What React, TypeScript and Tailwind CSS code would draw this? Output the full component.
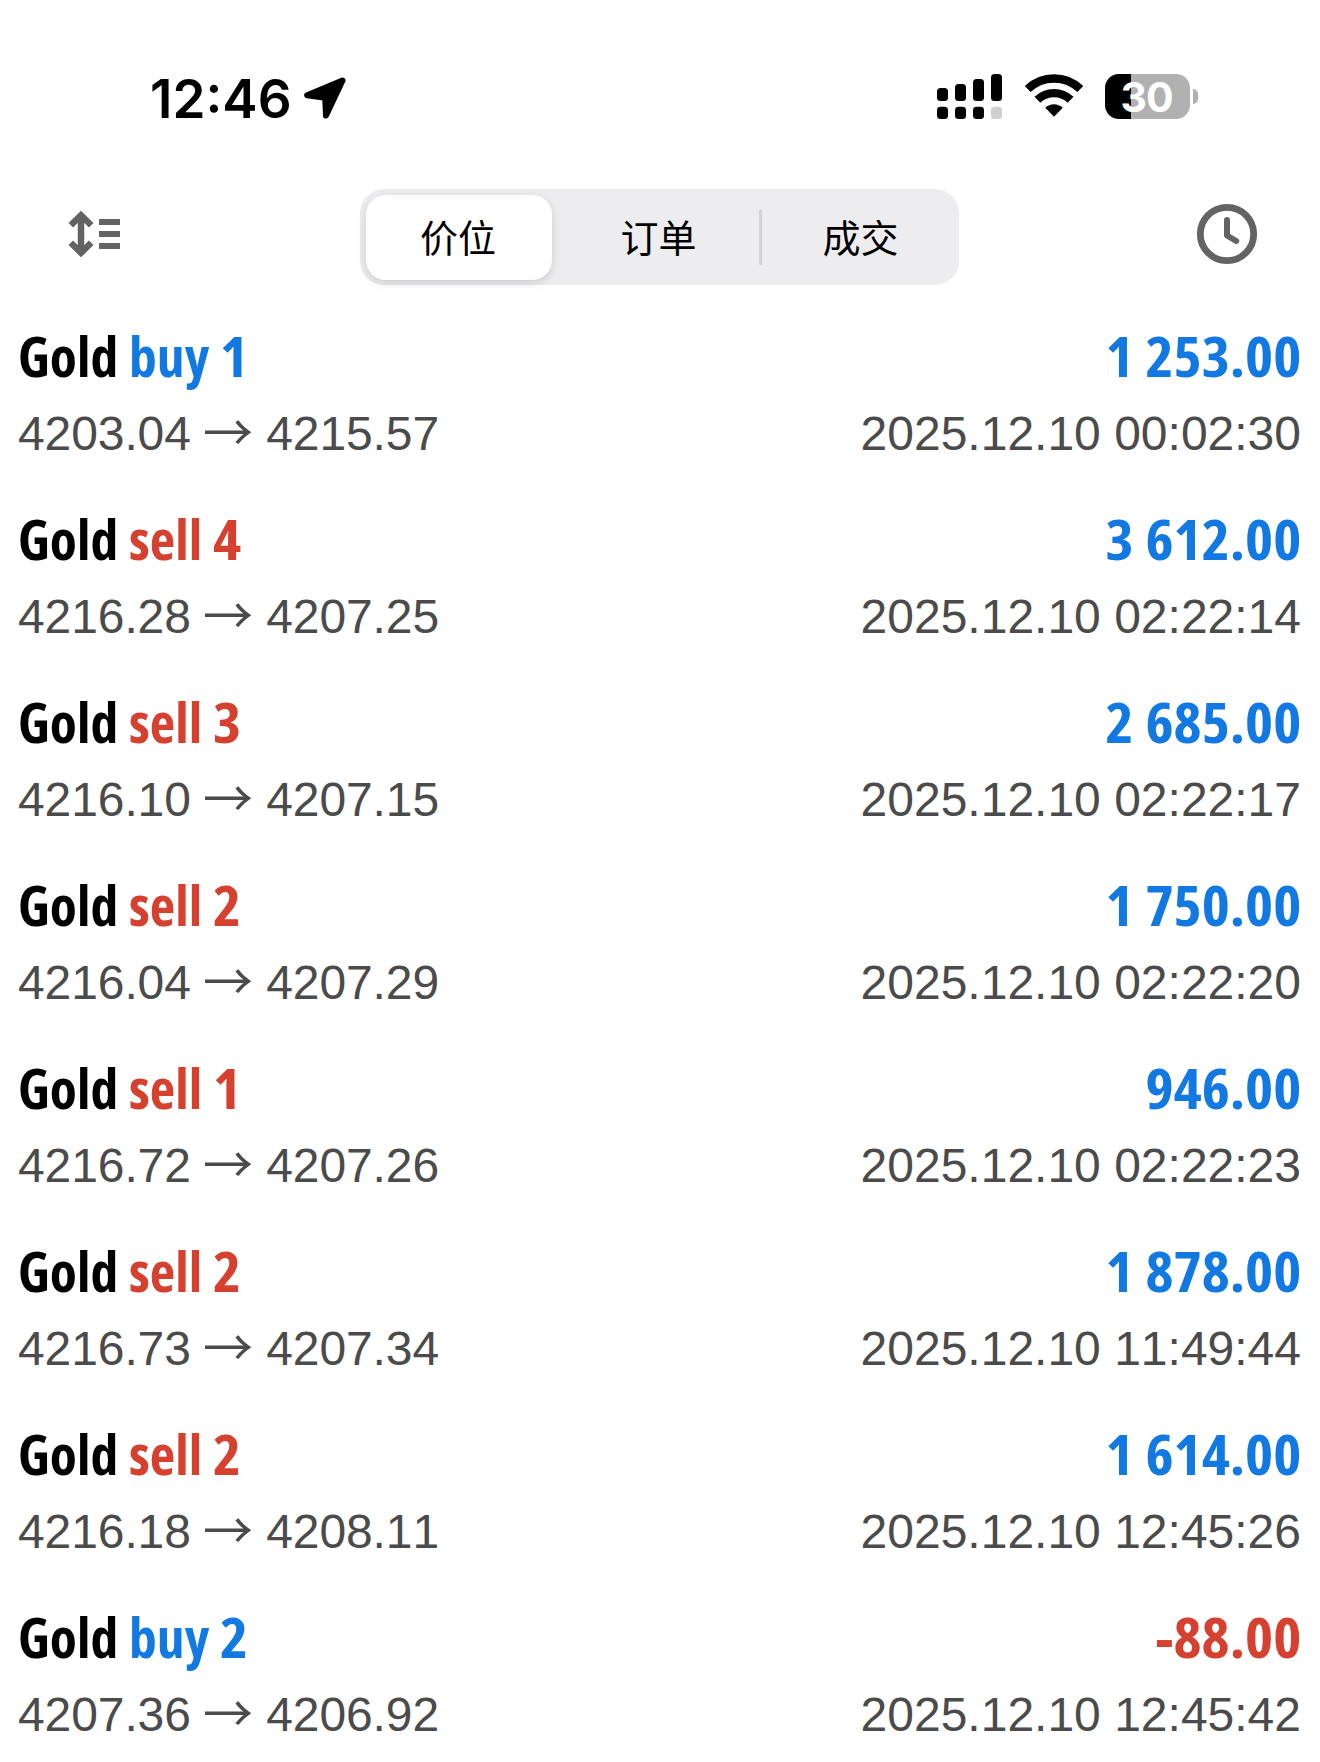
type Side = "buy" | "sell";

interface Deal {
  side: Side;
  volume: number;
  open: string;
  close: string;
  profit: string;
  time: string;
}

const deals: Deal[] = [
  { side: "buy", volume: 1, open: "4203.04", close: "4215.57", profit: "1 253.00", time: "2025.12.10 00:02:30" },
  { side: "sell", volume: 4, open: "4216.28", close: "4207.25", profit: "3 612.00", time: "2025.12.10 02:22:14" },
  { side: "sell", volume: 3, open: "4216.10", close: "4207.15", profit: "2 685.00", time: "2025.12.10 02:22:17" },
  { side: "sell", volume: 2, open: "4216.04", close: "4207.29", profit: "1 750.00", time: "2025.12.10 02:22:20" },
  { side: "sell", volume: 1, open: "4216.72", close: "4207.26", profit: "946.00", time: "2025.12.10 02:22:23" },
  { side: "sell", volume: 2, open: "4216.73", close: "4207.34", profit: "1 878.00", time: "2025.12.10 11:49:44" },
  { side: "sell", volume: 2, open: "4216.18", close: "4208.11", profit: "1 614.00", time: "2025.12.10 12:45:26" },
  { side: "buy", volume: 2, open: "4207.36", close: "4206.92", profit: "-88.00", time: "2025.12.10 12:45:42" },
];

function StatusBar() {
  return (
    <div className="flex h-[168px] items-start justify-between pl-[150px] pr-[122px] pt-[74px]">
      <div className="flex items-start">
        <span className="w-[154px] whitespace-nowrap font-['Inter',sans-serif] text-[53px] font-semibold leading-[50px]">12:46</span>
        <svg className="mt-[3px] h-[42px] w-[42px]" viewBox="0 0 42 42" fill="black" stroke="black" strokeWidth="6" strokeLinejoin="round">
          <path d="M38.5 3.5 L3.2 18.3 L21.2 20.8 L22 38.5 Z" />
        </svg>
      </div>

      <div className="flex items-start">
        {/* Dual SIM signal */}
        <svg className="h-[45px] w-[66px]" viewBox="0 0 66 45">
          <rect x="0" y="14" width="11" height="13" rx="3.5" />
          <rect x="18" y="10" width="11" height="17" rx="3.5" />
          <rect x="36" y="5" width="11" height="22" rx="3.5" />
          <rect x="54" y="0" width="11" height="27" rx="3.5" />
          <rect x="0" y="32.7" width="11" height="12.3" rx="3.5" />
          <rect x="18" y="32.7" width="11" height="12.3" rx="3.5" />
          <rect x="36" y="32.7" width="11" height="12.3" rx="3.5" />
          <rect x="54" y="32.7" width="11" height="12.3" rx="3.5" fill="#cfcfcf" />
        </svg>

        <svg className="ml-[22px] h-[43px] w-[58px]" viewBox="0 0 58 43" fill="none" stroke="black">
          <path d="M2.7 15 A38 38 0 0 1 55.3 15" strokeWidth="8.4" />
          <path d="M12.4 25.8 A24 24 0 0 1 45.6 25.8" strokeWidth="8.4" />
          <path d="M29 42.8 L20.3 33.8 A12.5 12.5 0 0 1 37.7 33.8 Z" fill="black" stroke="none" />
        </svg>

        <div className="ml-[22px] flex items-center">
          <div className="flex h-[45px] w-[85px] items-center justify-center rounded-[14px] bg-[linear-gradient(to_right,#000_26px,#b1b1b1_26px)]">
            <span className="pr-[2px] pt-px font-['Inter',sans-serif] text-[41px] font-[650] leading-none tracking-[-1px] text-white">30</span>
          </div>
          <div className="ml-[3px] h-[15px] w-[5px] rounded-r-full bg-[#b1b1b1]" />
        </div>
      </div>
    </div>
  );
}

function Toolbar() {
  return (
    <div className="flex h-[149px] items-start pl-[67px] pr-[62px] pt-[21px]">
      <svg className="mt-[21px] h-[48px] w-[54px]" viewBox="0 0 54 48" fill="none" stroke="#636363" strokeWidth="6.5">
        <path d="M14 5 V43 M3.8 15.2 L14 5.2 L24.2 15.2 M3.8 32.8 L14 42.8 L24.2 32.8" />
        <path d="M32 12 H53 M32 24 H53 M32 36 H53" strokeWidth="6" />
      </svg>

      <div className="ml-[239px] flex h-[96px] w-[599px] items-center rounded-[24px] bg-[#ededef] pl-[6px] font-['Noto_Sans_CJK_SC',sans-serif] text-[38px] leading-none text-black">
        <div className="flex h-[85px] w-[186px] items-center justify-center rounded-[20px] bg-white pb-[2px] pr-[2px] shadow-[0_3px_10px_rgba(0,0,0,0.14)]">
          价位
        </div>
        <div className="ml-[6px] flex flex-1 justify-center pb-[2px]">订单</div>
        <div className="h-[56px] w-[3px] rounded-full bg-[#d3d3d6]" />
        <div className="flex w-[197px] justify-center pb-[2px]">成交</div>
      </div>

      <svg className="ml-auto mt-[14px] h-[62px] w-[62px]" viewBox="0 0 62 62" fill="none" stroke="#636363" strokeLinecap="round" strokeLinejoin="round">
        <circle cx="31" cy="31" r="26.7" strokeWidth="6.8" />
        <path d="M31 17 V32.5 L40.2 38" strokeWidth="6" />
      </svg>
    </div>
  );
}

function DealRow({ deal }: { deal: Deal }) {
  const sideColor = deal.side === "buy" ? "text-[#1278e2]" : "text-[#d5402f]";
  const profitColor = deal.profit.startsWith("-") ? "text-[#d5402f]" : "text-[#1278e2]";

  return (
    <div className="h-[183px] pl-[18px] pr-[19px]">
      <div className="flex justify-between whitespace-pre font-['Open_Sans',sans-serif] text-[55.5px] font-bold leading-[78px] [font-stretch:75%] [word-spacing:1px]">
        <div className="text-black">
          Gold <span className={sideColor}>{deal.side} <span className="inline-block origin-left scale-x-[1.08]">{deal.volume}</span></span>
        </div>
        <div className={`origin-right scale-x-[1.08] ${profitColor}`}>{deal.profit}</div>
      </div>
      <div className="mt-[9px] flex justify-between whitespace-pre font-['Liberation_Sans',sans-serif] text-[48px] leading-[60px] text-[#4b4b4b] [font-kerning:none]">
        <div className="tracking-[-0.1px]">
          {deal.open} <span className="ml-[-1px] align-[-1px] font-['Noto_Sans_CJK_SC',sans-serif] text-[50px] leading-[0]">→</span> {deal.close}
        </div>
        <div>{deal.time}</div>
      </div>
    </div>
  );
}

export default function App() {
  return (
    <div className="h-[1762px] w-[1320px] overflow-hidden bg-white">
      <StatusBar />
      <Toolbar />
      {deals.map((deal) => (
        <DealRow key={deal.time} deal={deal} />
      ))}
    </div>
  );
}
